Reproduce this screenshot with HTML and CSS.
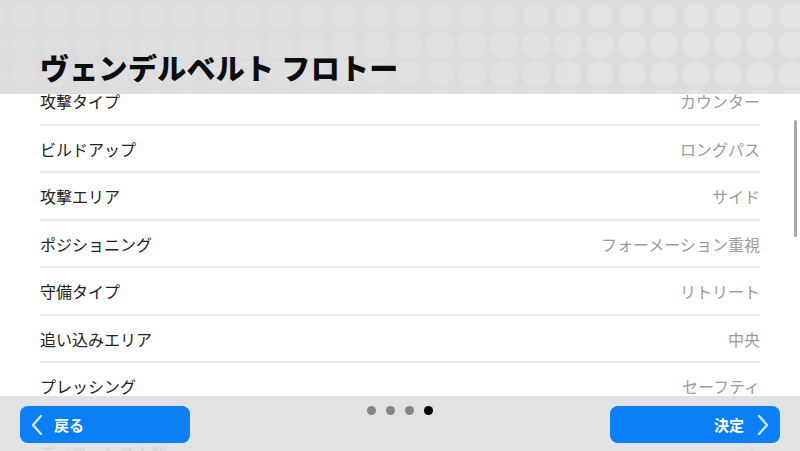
FILE: index.html
```html
<!DOCTYPE html>
<html lang="ja">
  <head>
    <meta charset="UTF-8" />
    <meta name="viewport" content="width=device-width, initial-scale=1.0" />
    <title>チームスタイル</title>
    <link rel="stylesheet" href="styles.css">
  </head>
  <body>
    <div class="screen">
      <div class="header">
        <h1>ヴェンデルベルト フロトー</h1>
      </div>
      <div class="list-wrap">
        <div class="list">
          <div class="row"><span class="label">攻撃タイプ</span><span class="value">カウンター</span></div>
          <div class="row"><span class="label">ビルドアップ</span><span class="value">ロングパス</span></div>
          <div class="row"><span class="label">攻撃エリア</span><span class="value">サイド</span></div>
          <div class="row"><span class="label">ポジショニング</span><span class="value">フォーメーション重視</span></div>
          <div class="row"><span class="label">守備タイプ</span><span class="value">リトリート</span></div>
          <div class="row"><span class="label">追い込みエリア</span><span class="value">中央</span></div>
          <div class="row"><span class="label">プレッシング</span><span class="value">セーフティ</span></div>
          <div class="row row-last"><span class="label">ディフェンス人数</span><span class="value">3人</span></div>
        </div>
        <div class="scrollbar"></div>
      </div>
      <div class="footer">
        <button class="btn">
          <svg class="chev" width="14" height="22" viewBox="0 0 14 22"><path d="M11 2 L3 11 L11 20" fill="none" stroke="#cfe6ff" stroke-width="2.4" stroke-linecap="round" stroke-linejoin="round"/></svg>
          <span>戻る</span>
        </button>
        <div class="dots">
          <span class="dot"></span>
          <span class="dot"></span>
          <span class="dot"></span>
          <span class="dot active"></span>
        </div>
        <button class="btn btn-next">
          <span>決定</span>
          <svg class="chev" width="14" height="22" viewBox="0 0 14 22"><path d="M3 2 L11 11 L3 20" fill="none" stroke="#cfe6ff" stroke-width="2.4" stroke-linecap="round" stroke-linejoin="round"/></svg>
        </button>
      </div>
    </div>
  </body>
</html>
```

FILE: styles.css
```css
body {
  margin: 0;
  background-color: #ffffff;
  font-family: "Noto Sans CJK JP", "Noto Sans", sans-serif;
}
.screen {
  position: relative;
  width: 800px;
  height: 451px;
  overflow: hidden;
  display: flex;
  flex-direction: column;
}
.header {
  height: 94px;
  flex-shrink: 0;
  box-sizing: border-box;
  padding: 0 40px 12px;
  display: flex;
  align-items: flex-end;
  background-color: #dcdcde;
  background-image:
    linear-gradient(to right, rgba(220, 220, 222, 0.7) 0%, rgba(220, 220, 222, 0.45) 50%, rgba(220, 220, 222, 0.1) 100%),
    radial-gradient(circle at 16px 15px, rgba(255, 255, 255, 0.22) 13px, rgba(255, 255, 255, 0) 14px);
  background-size: 100% 100%, 32px 29px;
  background-position: 0 0, 8px 1px;
  position: relative;
  z-index: 1;
}
.header h1 {
  margin: 0;
  font-size: 29px;
  font-weight: 900;
  line-height: 1;
  color: #0d0d0d;
  letter-spacing: 0.3px;
}
.list-wrap {
  position: relative;
  flex: 1;
  overflow: hidden;
}
.list {
  margin-top: -16px;
  padding: 0 40px;
}
.row {
  height: 47.5px;
  box-sizing: border-box;
  display: flex;
  justify-content: space-between;
  align-items: center;
  border-bottom: 2px solid #e8e8ea;
  font-size: 16px;
  padding-top: 1px;
}
.row-last {
  padding-top: 26px;
  height: 60px;
}
.label {
  color: #222222;
}
.value {
  color: #9c9c9c;
}
.scrollbar {
  position: absolute;
  right: 3px;
  top: 26px;
  width: 3px;
  height: 117px;
  border-radius: 2px;
  background-color: #a8a8a8;
}
.footer {
  position: absolute;
  left: 0;
  right: 0;
  bottom: 0;
  height: 55px;
  box-sizing: border-box;
  padding: 10px 20px 8px;
  display: flex;
  justify-content: space-between;
  align-items: flex-start;
  background-color: rgba(224, 224, 226, 0.93);
  z-index: 2;
}
.btn {
  width: 170px;
  height: 37px;
  box-sizing: border-box;
  border: none;
  border-radius: 8px;
  background-color: #0b7ff5;
  color: #ffffff;
  font-family: "Noto Sans CJK JP", sans-serif;
  font-size: 15px;
  font-weight: 700;
  display: flex;
  align-items: center;
  gap: 10px;
  padding: 0 10px;
}
.btn-next {
  justify-content: flex-end;
  gap: 12px;
}
.dots {
  display: flex;
  gap: 10px;
}
.dot {
  width: 9px;
  height: 9px;
  border-radius: 50%;
  background-color: #858585;
}
.dot.active {
  background-color: #000000;
}
```
